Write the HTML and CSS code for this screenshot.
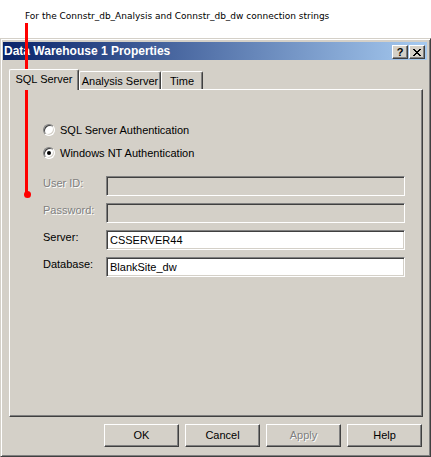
FILE: index.html
```html
<!DOCTYPE html>
<html>
<head>
<meta charset="utf-8">
<link rel="stylesheet" href="styles.css">
</head>
<body>
<div class="caption">For the Connstr_db_Analysis and Connstr_db_dw connection strings</div>
<div class="window">
  <div class="titlebar">
    <span class="title">Data Warehouse 1 Properties</span>
    <div class="title-btns">
      <div class="tbtn help-q">?</div>
      <div class="tbtn">
        <svg width="8" height="7" viewBox="0 0 8 7"><path d="M0 0h2v1h1v1h2V1h1V0h2v1H7v1H6v1H5v1h1v1h1v1h1v1H6V6H5V5H3v1H2v1H0V6h1V5h1V4h1V3H2V2H1V1H0z" fill="#000"/></svg>
      </div>
    </div>
  </div>
  <div class="tabs">
    <div class="tab active">SQL Server</div>
    <div class="tab w2">Analysis Server</div>
    <div class="tab w3">Time</div>
  </div>
  <div class="panel">
    <div class="radios">
      <div class="radio-row"><span class="radio"></span><span>SQL Server Authentication</span></div>
      <div class="radio-row"><span class="radio checked"></span><span>Windows NT Authentication</span></div>
    </div>
    <div class="form">
      <span class="label disabled">User ID:</span><div class="field off"></div>
      <span class="label disabled">Password:</span><div class="field off"></div>
      <span class="label">Server:</span><div class="field">CSSERVER44</div>
      <span class="label">Database:</span><div class="field">BlankSite_dw</div>
    </div>
  </div>
  <div class="buttons">
    <div class="btn">OK</div>
    <div class="btn">Cancel</div>
    <div class="btn disabled">Apply</div>
    <div class="btn">Help</div>
  </div>
</div>
<div class="pointer-line"></div>
<div class="pointer-dot"></div>
</body>
</html>
```
FILE: styles.css
```css
html, body {
  margin: 0;
  padding: 0;
}
body {
  width: 431px;
  height: 457px;
  background: #fff;
  position: relative;
  overflow: hidden;
  font-family: "Liberation Sans", Arial, sans-serif;
  font-size: 11px;
  color: #000;
}
.caption {
  height: 38px;
  box-sizing: border-box;
  padding: 10px 0 0 25px;
  line-height: 12px;
  font-family: "DejaVu Sans", Verdana, sans-serif;
  font-size: 9px;
  white-space: nowrap;
}
.window {
  height: 419px;
  box-sizing: border-box;
  background: #d4d0c8;
  border: 1px solid;
  border-color: #d4d0c8 #404040 #404040 #d4d0c8;
  box-shadow: inset 1px 1px #fff, inset -1px -1px #808080;
  padding: 3px 3px 3px 2px;
  display: flex;
  flex-direction: column;
}
.titlebar {
  height: 18px;
  flex: none;
  background: linear-gradient(to right, #0a246a, #a6caf0);
  display: flex;
  align-items: center;
  justify-content: space-between;
  padding: 0 2px 0 1px;
}
.title {
  color: #fff;
  font-weight: bold;
  font-size: 12px;
  line-height: 14px;
}
.title-btns {
  display: flex;
  gap: 1px;
  margin-top: 2px;
}
.tbtn {
  width: 16px;
  height: 14px;
  box-sizing: border-box;
  background: #d4d0c8;
  border: 1px solid;
  border-color: #fff #404040 #404040 #fff;
  box-shadow: inset -1px -1px #808080;
  display: flex;
  align-items: center;
  justify-content: center;
}
.help-q {
  font-weight: bold;
  font-size: 11px;
  line-height: 11px;
}
.tabs {
  display: flex;
  align-items: flex-end;
  height: 20px;
  margin: 9px 0 0 6px;
  flex: none;
  position: relative;
  z-index: 1;
}
.tab {
  box-sizing: border-box;
  height: 18px;
  border-top: 1px solid #fff;
  border-left: 1px solid #fff;
  border-right: 1px solid #404040;
  box-shadow: inset -1px 0 #808080;
  border-radius: 2px 2px 0 0;
  background: #d4d0c8;
  line-height: 17px;
  text-align: center;
  padding-top: 1px;
}
.tab.active {
  width: 70px;
  height: 21px;
  margin-bottom: -1px;
  line-height: 16px;
  padding-top: 1px;
}
.tab.w2 { width: 82px; }
.tab.w3 { width: 42px; }
.panel {
  flex: none;
  height: 328px;
  box-sizing: border-box;
  margin: 0 4px 0 6px;
  border: 1px solid;
  border-color: #fff #404040 #404040 #fff;
  box-shadow: inset -1px -1px #808080;
  padding: 34px 17px 0 33px;
}
.radios {
  display: flex;
  flex-direction: column;
  gap: 11px;
}
.radio-row {
  display: flex;
  align-items: center;
  height: 12px;
  gap: 5px;
  line-height: 13px;
}
.radio {
  width: 12px;
  height: 12px;
  box-sizing: border-box;
  border-radius: 50%;
  background: #fff;
  border: 1px solid;
  border-color: #808080 #fff #fff #808080;
  box-shadow: inset 1px 1px #404040, inset -1px -1px #d4d0c8;
  position: relative;
  flex: none;
}
.radio.checked::after {
  content: "";
  position: absolute;
  left: 3px;
  top: 3px;
  width: 4px;
  height: 4px;
  border-radius: 50%;
  background: #000;
}
.form {
  margin-top: 17px;
  display: grid;
  grid-template-columns: 63px 1fr;
  row-gap: 7px;
  align-items: start;
}
.label {
  line-height: 13px;
  padding-top: 1px;
}
.disabled {
  color: #808080;
  text-shadow: 1px 1px #fff;
}
.field {
  height: 20px;
  box-sizing: border-box;
  background: #fff;
  border: 1px solid;
  border-color: #808080 #fff #fff #808080;
  box-shadow: inset 1px 1px #404040, inset -1px -1px #d4d0c8;
  padding-left: 3px;
  line-height: 18px;
}
.field.off {
  background: #d4d0c8;
}
.buttons {
  display: flex;
  justify-content: flex-end;
  gap: 6px;
  margin-top: 7px;
  padding-right: 5px;
  flex: none;
}
.btn {
  width: 75px;
  height: 23px;
  box-sizing: border-box;
  border: 1px solid;
  border-color: #fff #404040 #404040 #fff;
  box-shadow: inset -1px -1px #808080;
  text-align: center;
  line-height: 20px;
}
.pointer-line {
  position: absolute;
  left: 25px;
  top: 23px;
  width: 3px;
  height: 171px;
  background: #ff0000;
}
.pointer-dot {
  position: absolute;
  left: 24px;
  top: 191px;
  width: 7px;
  height: 7px;
  border-radius: 50%;
  background: #ff0000;
}
```
